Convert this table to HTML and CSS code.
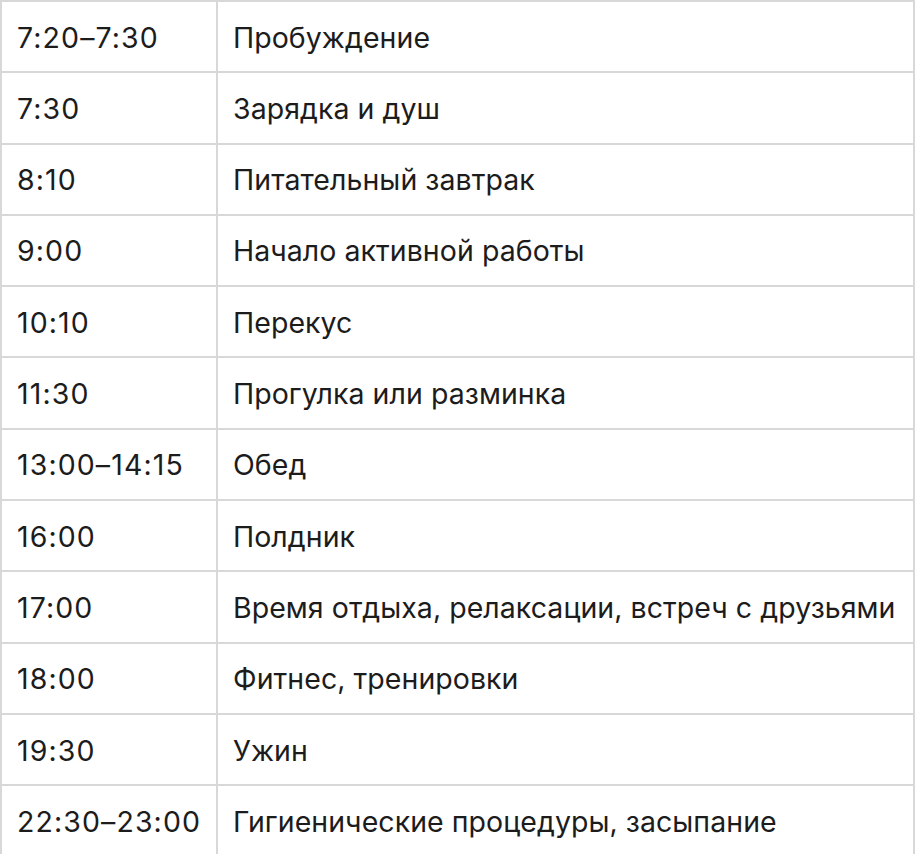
FILE: index.html
```html
<!DOCTYPE html>
<html lang="ru">
<head>
<meta charset="utf-8">
<title>Режим дня</title>
<link rel="stylesheet" href="styles.css">
</head>
<body>
<table class="schedule">
  <tbody>
    <tr><td class="time">7:20–7:30</td><td class="task">Пробуждение</td></tr>
    <tr><td class="time">7:30</td><td class="task">Зарядка и душ</td></tr>
    <tr><td class="time">8:10</td><td class="task">Питательный завтрак</td></tr>
    <tr><td class="time">9:00</td><td class="task">Начало активной работы</td></tr>
    <tr><td class="time">10:10</td><td class="task">Перекус</td></tr>
    <tr><td class="time">11:30</td><td class="task">Прогулка или разминка</td></tr>
    <tr><td class="time">13:00–14:15</td><td class="task">Обед</td></tr>
    <tr><td class="time">16:00</td><td class="task">Полдник</td></tr>
    <tr><td class="time">17:00</td><td class="task">Время отдыха, релаксации, встреч с друзьями</td></tr>
    <tr><td class="time">18:00</td><td class="task">Фитнес, тренировки</td></tr>
    <tr><td class="time">19:30</td><td class="task">Ужин</td></tr>
    <tr><td class="time">22:30–23:00</td><td class="task">Гигиенические процедуры, засыпание</td></tr>
  </tbody>
</table>
</body>
</html>
```
FILE: styles.css
```css
html, body {
  margin: 0;
  padding: 0;
  background: #ffffff;
}
body {
  font-family: Inter, "Noto Sans", sans-serif;
  color: #1c1c1c;
}
.schedule {
  border-collapse: collapse;
  width: 915px;
  table-layout: fixed;
}
.schedule tr {
  height: 71.3px;
}
.schedule td {
  border: 2px solid #d8d8d8;
  padding: 2px 16px 0 16px;
  font-size: 28.5px;
  line-height: 1.2;
  vertical-align: middle;
  white-space: nowrap;
}
.schedule .time {
  width: 183px;
  padding-left: 15px;
  letter-spacing: 1.1px;
}
.schedule .task {
  padding-left: 15px;
  letter-spacing: 0.05px;
}
```
